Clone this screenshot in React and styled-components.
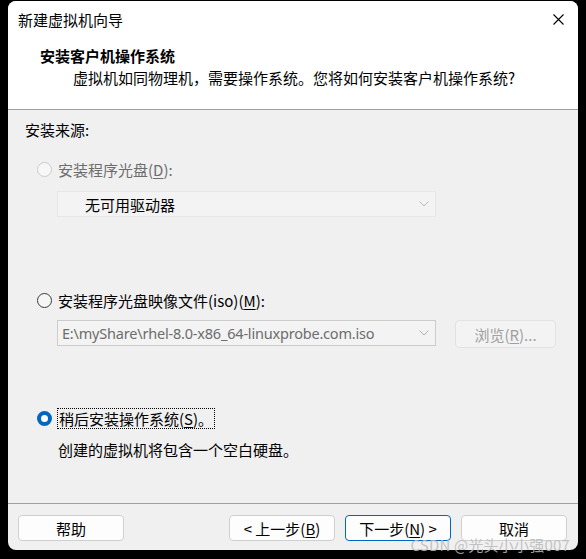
import { createGlobalStyle, styled } from "styled-components";

const GlobalStyle = createGlobalStyle`
  html, body {
    margin: 0;
    padding: 0;
    background: #000;
  }
  body {
    font-family: "Noto Sans CJK SC", "Noto Sans", "Liberation Sans", sans-serif;
    font-size: 15px;
    color: #000;
  }
`;

const Page = styled.div`
  width: 586px;
  height: 559px;
  padding: 1px 0 0 8px;
  box-sizing: border-box;
  position: relative;
`;

const Window = styled.div`
  width: 570px;
  height: 549px;
  background: #f0f0f0;
  border-radius: 8px;
  overflow: hidden;
  display: flex;
  flex-direction: column;
`;

const TitleBar = styled.div`
  height: 37px;
  background: #fff;
  display: flex;
  align-items: center;
  justify-content: space-between;
  padding: 0 14px 0 10px;
  font-size: 15px;
`;

const Header = styled.div`
  height: 72px;
  background: #fff;
  border-bottom: 1px solid #a0a0a0;
  padding: 7px 0 0 32px;
  box-sizing: border-box;
`;

const HeaderTitle = styled.div`
  font-weight: bold;
  font-size: 15px;
  line-height: 22px;
`;

const HeaderSub = styled.div`
  padding-left: 33px;
  line-height: 22px;
`;

const Body = styled.div`
  flex: 1;
  padding: 9px 0 0 17px;
  display: flex;
  flex-direction: column;
  position: relative;
`;

const Label = styled.div`
  line-height: 22px;
  margin-top: ${(p) => p.$mt || 0}px;
  padding-left: ${(p) => p.$indent || 0}px;
  color: ${(p) => (p.$disabled ? "#6d6d6d" : "#000")};
`;

const RadioRow = styled.div`
  display: flex;
  align-items: center;
  gap: 6px;
  margin-top: ${(p) => p.$mt || 0}px;
  padding-left: 12px;
  height: 22px;
  color: ${(p) => (p.$disabled ? "#6d6d6d" : "#000")};
`;

const RadioDot = styled.span`
  width: 15px;
  height: 15px;
  border-radius: 50%;
  box-sizing: border-box;
  flex-shrink: 0;
  border: 1px solid ${(p) => (p.$disabled ? "#cbcbcb" : "#3a3a3a")};
  background: ${(p) => (p.$disabled ? "#f7f7f7" : "#f6f6f6")};
  ${(p) =>
    p.$checked &&
    `
    border: 4.5px solid #0067c0;
    background: #fff;
  `}
`;

const Focus = styled.span`
  outline: 1px dotted #000;
  padding: 0 1px;
  line-height: 19px;
`;

const U = styled.span`
  text-decoration: underline;
  text-underline-offset: 2px;
`;

const FieldRow = styled.div`
  display: flex;
  align-items: flex-start;
  gap: 19px;
  margin-top: ${(p) => p.$mt || 0}px;
  padding-left: 32px;
`;

const Select = styled.div`
  width: 379px;
  height: 26px;
  box-sizing: border-box;
  border: 1px solid ${(p) => p.$border};
  background: #f3f3f3;
  display: flex;
  align-items: center;
  justify-content: space-between;
  padding: 0 6px 0 ${(p) => p.$pad}px;
  color: ${(p) => p.$color};
  font-size: 15px;
`;

const SelectText = styled.span`
  font-family: ${(p) => (p.$latin ? '"Noto Sans", "Noto Sans CJK SC", sans-serif' : "inherit")};
  font-size: ${(p) => (p.$latin ? "14.5px" : "15px")};
  letter-spacing: ${(p) => (p.$latin ? "-0.2px" : "0")};
`;

const Button = styled.button`
  width: 106px;
  height: 26px;
  box-sizing: border-box;
  border-radius: 4px;
  font-family: inherit;
  font-size: 15px;
  padding: 0;
  background: ${(p) => (p.$disabled ? "#f3f3f3" : "#fdfdfd")};
  color: ${(p) => (p.$disabled ? "#a0a0a0" : "#000")};
  border: 1px solid
    ${(p) => (p.$primary ? "#0067c0" : p.$disabled ? "#e2e2e2" : "#d0d0d0")};
  display: flex;
  align-items: center;
  justify-content: center;
  line-height: 1;
`;

const BrowseButton = styled(Button)`
  width: 101px;
  height: 28px;
`;

const Footer = styled.div`
  height: 47px;
  border-top: 1px solid #a0a0a0;
  display: flex;
  align-items: flex-start;
  padding: 11px 0 0 10px;
  box-sizing: border-box;
`;

const Spacer = styled.div`
  width: ${(p) => p.$w}px;
  flex-shrink: 0;
`;

const Watermark = styled.div`
  position: absolute;
  right: 16px;
  bottom: 5px;
  font-size: 15px;
  line-height: 18px;
  color: rgba(185, 185, 185, 0.85);
  letter-spacing: 0.2px;
  pointer-events: none;
`;

const Chevron = ({ color }) => (
  <svg width="10" height="6" viewBox="0 0 10 6">
    <path d="M0.5 0.5 L5 5 L9.5 0.5" fill="none" stroke={color} strokeWidth="1" />
  </svg>
);

const CloseIcon = () => (
  <svg width="11" height="11" viewBox="0 0 11 11">
    <path d="M0.5 0.5 L10.5 10.5 M10.5 0.5 L0.5 10.5" stroke="#000" strokeWidth="1.1" />
  </svg>
);

export default function App() {
  return (
    <Page>
      <GlobalStyle />
      <Window>
        <TitleBar>
          <span>新建虚拟机向导</span>
          <CloseIcon />
        </TitleBar>
        <Header>
          <HeaderTitle>安装客户机操作系统</HeaderTitle>
          <HeaderSub>虚拟机如同物理机，需要操作系统。您将如何安装客户机操作系统?</HeaderSub>
        </Header>
        <Body>
          <Label>安装来源:</Label>
          <RadioRow $mt={17} $disabled>
            <RadioDot $disabled />
            <span>
              安装程序光盘(<U>D</U>):
            </span>
          </RadioRow>
          <FieldRow $mt={11}>
            <Select $border="#e6e6e6" $pad={27} $color="#000">
              <SelectText>无可用驱动器</SelectText>
              <Chevron color="#b8b8b8" />
            </Select>
          </FieldRow>
          <RadioRow $mt={72}>
            <RadioDot />
            <span>
              安装程序光盘映像文件(iso)(<U>M</U>):
            </span>
          </RadioRow>
          <FieldRow $mt={9}>
            <Select $border="#cccccc" $pad={4} $color="#6d6d6d">
              <SelectText $latin>E:\myShare\rhel-8.0-x86_64-linuxprobe.com.iso</SelectText>
              <Chevron color="#b0b0b0" />
            </Select>
            <BrowseButton $disabled>
              浏览(<U>R</U>)...
            </BrowseButton>
          </FieldRow>
          <RadioRow $mt={59}>
            <RadioDot $checked />
            <Focus>
              稍后安装操作系统(<U>S</U>)。
            </Focus>
          </RadioRow>
          <Label $mt={10} $indent={33}>
            创建的虚拟机将包含一个空白硬盘。
          </Label>
        </Body>
        <Footer>
          <Button>帮助</Button>
          <Spacer $w={105} />
          <Button>
            &lt; 上一步(<U>B</U>)
          </Button>
          <Spacer $w={10} />
          <Button $primary>
            下一步(<U>N</U>) &gt;
          </Button>
          <Spacer $w={10} />
          <Button>取消</Button>
        </Footer>
      </Window>
      <Watermark>CSDN @光头小小强007</Watermark>
    </Page>
  );
}
